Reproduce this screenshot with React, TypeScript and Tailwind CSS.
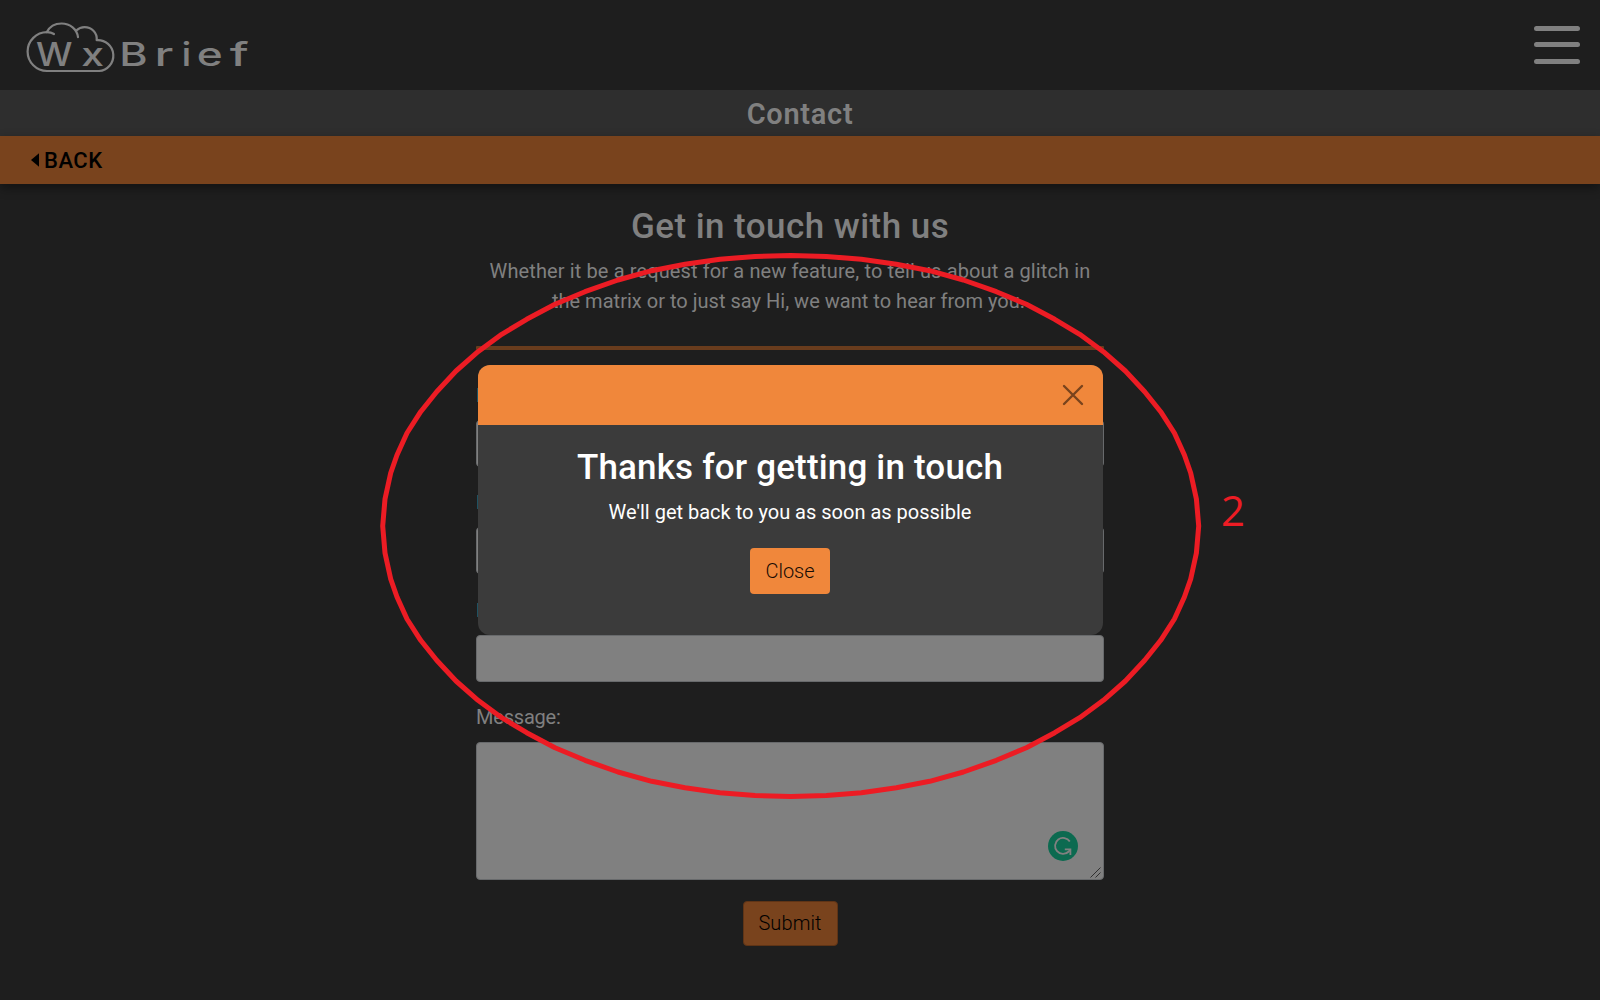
const HALF: [number, number][] = [
  [382.7, 526], [385, 499], [390.7, 473], [397, 455], [407, 433], [420.7, 411.7],
  [436.7, 391.7], [456, 371], [478, 351.7], [501.7, 334.3], [526.7, 319.3],
  [555, 304.3], [585, 291.7], [618, 280], [651.7, 270.7], [685, 264.3],
  [720, 259.3], [755, 256.4], [790.7, 255.5],
];
const CX = 790.7;
const CY = 526;
const TOP = [...HALF, ...HALF.slice(0, -1).reverse().map(([x, y]) => [2 * CX - x, y])];
const BOTTOM = TOP.slice(1, -1).reverse().map(([x, y]) => [x, 2 * CY - y]);
const RING = [...TOP, ...BOTTOM].map((p) => p.join(",")).join(" ");

const LETTERS = [
  { c: "W", x: 36, sx: 1.12 },
  { c: "x", x: 81.2, sx: 1.26 },
  { c: "B", x: 119.2, sx: 1.33 },
  { c: "r", x: 154.4, sx: 1.5 },
  { c: "i", x: 181.6, sx: 1.2 },
  { c: "e", x: 196.8, sx: 1.36 },
  { c: "f", x: 229.8, sx: 1.54 },
];

function Logo() {
  return (
    <svg width="270" height="90" viewBox="0 0 270 90" fill="none">
      <g stroke="#808080" strokeWidth="2.2" strokeLinecap="round">
        <path d="M54 34 C52 32.8 49.5 32.2 47 32.2 A19.4 19.4 0 0 0 47 71 H99 A15.4 15.4 0 0 0 96.8 40.2" />
        <path d="M46.7 32.2 C49.5 26.8 55 23.5 61.5 23.5 C70 23.5 77.2 29 78 37.2" />
        <path d="M76 30.8 C78.5 28.5 81 27.2 84.5 27.2 C91.5 27.2 97.2 32.5 96.8 40" />
      </g>
      <g fill="#808080" fontFamily="Inter, sans-serif" fontSize="32.5" fontWeight="500">
        {LETTERS.map((l) => (
          <text key={l.c} transform={`translate(${l.x} 65.8) scale(${l.sx} 1)`}>{l.c}</text>
        ))}
      </g>
    </svg>
  );
}

function Field({ gap }: { gap: string }) {
  return (
    <div className={gap}>
      <div className="mb-[10px] flex h-[30px] items-start pl-px">
        <span className="mt-2 h-[14px] w-px bg-[#1f5262]" />
      </div>
      <div className="h-[47px] rounded border border-[#686a6c] bg-[#808080]" />
    </div>
  );
}

export default function App() {
  return (
    <div className="relative h-[1000px] w-[1600px] overflow-hidden bg-[#1e1e1e] font-[Roboto,sans-serif] text-[20px] leading-[30px] text-[#808080]">
      <header className="flex h-[90px] items-start justify-between pr-5">
        <Logo />
        <svg width="46" height="90" fill="#808080">
          <rect y="26" width="46" height="5" rx="2.5" />
          <rect y="42" width="46" height="5" rx="2.5" />
          <rect y="59" width="46" height="5" rx="2.5" />
        </svg>
      </header>
      <div className="flex h-[46px] items-center justify-center bg-[#2e2e2e] pt-px text-[29px] font-semibold tracking-[0.7px]">
        Contact
      </div>
      <div className="flex h-12 items-center gap-[5px] bg-[#79431d] pl-[31px] text-[22px] font-medium tracking-[0.5px] text-black shadow-[0_4px_10px_rgba(0,0,0,0.4)]">
        <svg width="8" height="14" viewBox="0 0 8 14"><path d="M0 7 L8 0.3 V13.7 Z" /></svg>
        <span className="pt-0.5">BACK</span>
      </div>

      <main className="ml-[476px] w-[628px] pt-[22px]">
        <h1 className="mb-2 text-center text-[35px] leading-[42px] font-medium tracking-[0.45px]">Get in touch with us</h1>
        <p className="text-center whitespace-nowrap">
          <span className="tracking-[0.12px]">Whether it be a request for a new feature, to tell us about a glitch in</span>
          <br />
          <span className="pr-[3px] tracking-[0.02px]">the matrix or to just say Hi, we want to hear from you.</span>
        </p>
        <div className="mt-[30px] mb-[30px] h-1 rounded-[1px] bg-[#693c1d]" />
        <Field gap="mb-5" />
        <Field gap="mb-[21px]" />
        <Field gap="mb-5" />
        <div className="mb-[10px] tracking-[-0.2px]">Message:</div>
        <div className="relative h-[138px] rounded border border-[#686a6c] bg-[#808080]">
          <svg className="absolute right-[25px] bottom-[18px]" width="30" height="30" viewBox="0 0 30 30" fill="none">
            <circle cx="15" cy="15" r="15" fill="#0c6a50" />
            <path d="M21.8 10.6 A8 8 0 1 0 20.8 20.5 L22.2 18.6" stroke="#808080" strokeWidth="1.8" />
            <path d="M16.8 18.3 H22.4 V24" stroke="#808080" strokeWidth="1.8" />
          </svg>
          <svg className="absolute right-[2px] bottom-[1px]" width="11" height="11" stroke="#303030" strokeWidth="1">
            <path d="M0.5 10.5 L10.5 0.5 M5.5 10.5 L10.5 5.5" />
          </svg>
        </div>
        <div className="mt-[21px] flex justify-center">
          <button className="h-[45px] w-[95px] rounded border border-[#5f3416] bg-[#79431d] pb-px font-light tracking-[0.1px] text-black">Submit</button>
        </div>
      </main>

      <section className="absolute top-[365px] left-[478px] h-[270px] w-[625px] overflow-hidden rounded-[12px] bg-[#3b3b3b] text-center text-white">
        <div className="flex h-[60px] items-center justify-end bg-[#f0873b] pr-[19px]">
          <svg width="22" height="22" viewBox="0 0 22 22" stroke="#79431d" strokeWidth="2.4" strokeLinecap="round">
            <path d="M2 2 L20 20 M20 2 L2 20" />
          </svg>
        </div>
        <div className="pr-px">
          <h2 className="mt-[22px] mb-2 text-[35px] leading-[42px] font-medium tracking-[0.17px]">Thanks for getting in touch</h2>
          <p>We'll get back to you as soon as possible</p>
          <button className="mt-[21px] h-[46px] w-[80px] rounded bg-[#f0873b] font-light text-[#180c04]">Close</button>
        </div>
      </section>

      <svg className="pointer-events-none absolute inset-0" width="1600" height="1000" fill="none">
        <polygon points={RING} stroke="#ec1c24" strokeWidth="5" strokeLinejoin="round" />
      </svg>
      <span className="absolute top-[485px] left-[1221px] font-['Open_Sans',sans-serif] text-[42px] leading-[50px] text-[#ec1c24]">2</span>
    </div>
  );
}
